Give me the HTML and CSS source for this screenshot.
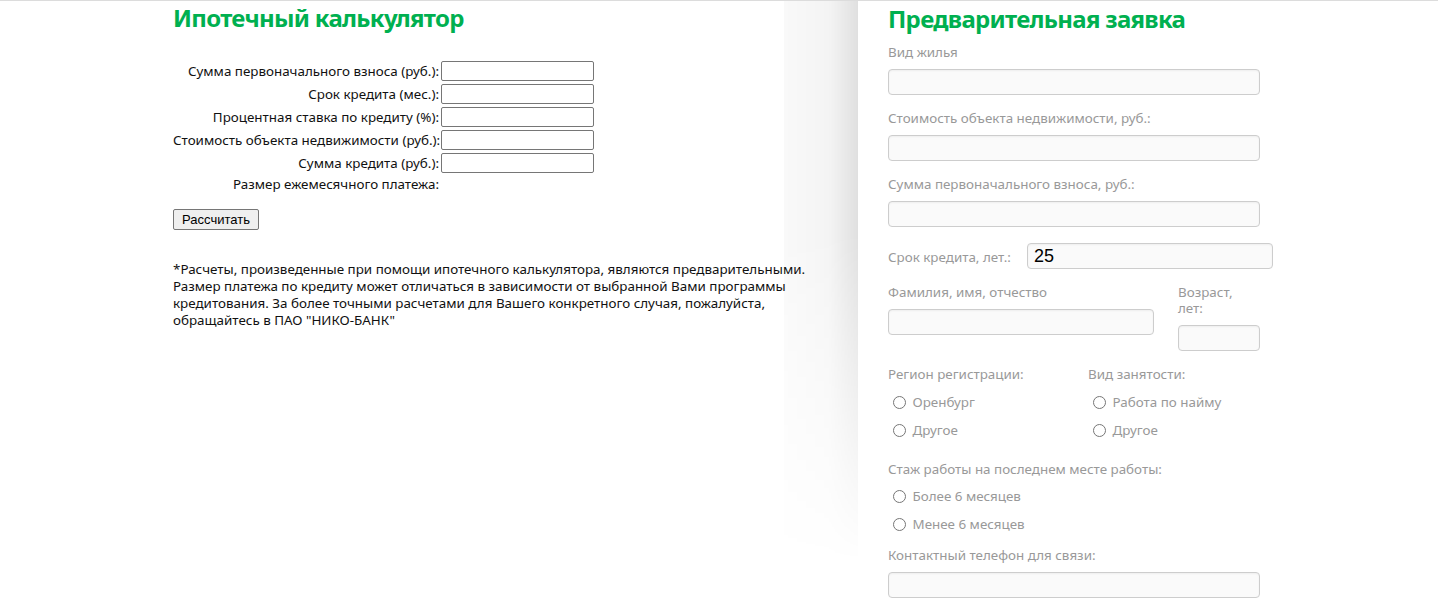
FILE: index.html
```html
<!DOCTYPE html>
<html lang="ru">
<head>
<meta charset="utf-8">
<title>Ипотечный калькулятор</title>
<link rel="stylesheet" href="styles.css">
</head>
<body>
<div class="page">
  <section class="calc">
    <h1 class="title">Ипотечный калькулятор</h1>
    <div class="calc-grid">
      <label class="calc-label">Сумма первоначального взноса (руб.):</label><input class="calc-input" type="text">
      <label class="calc-label">Срок кредита (мес.):</label><input class="calc-input" type="text">
      <label class="calc-label">Процентная ставка по кредиту (%):</label><input class="calc-input" type="text">
      <label class="calc-label">Стоимость объекта недвижимости (руб.):</label><input class="calc-input" type="text">
      <label class="calc-label">Сумма кредита (руб.):</label><input class="calc-input" type="text">
      <span class="calc-label calc-label--result">Размер ежемесячного платежа:</span><span class="calc-result"></span>
    </div>
    <button class="calc-btn" type="button">Рассчитать</button>
    <p class="note">*Расчеты, произведенные при помощи ипотечного калькулятора, являются предварительными. Размер платежа по кредиту может отличаться в зависимости от выбранной Вами программы кредитования. За более точными расчетами для Вашего конкретного случая, пожалуйста, обращайтесь в ПАО "НИКО-БАНК"</p>
  </section>

  <section class="apply">
    <h1 class="title">Предварительная заявка</h1>

    <div class="field">
      <label class="lbl">Вид жилья</label>
      <input class="inp" type="text">
    </div>
    <div class="field">
      <label class="lbl">Стоимость объекта недвижимости, руб.:</label>
      <input class="inp" type="text">
    </div>
    <div class="field">
      <label class="lbl">Сумма первоначального взноса, руб.:</label>
      <input class="inp" type="text">
    </div>
    <div class="field field--inline">
      <label class="lbl lbl--inline">Срок кредита, лет.:</label>
      <input class="inp inp--term" type="text" value="25">
    </div>
    <div class="field-row">
      <div class="field field--fio">
        <label class="lbl">Фамилия, имя, отчество</label>
        <input class="inp inp--fio" type="text">
      </div>
      <div class="field field--age">
        <label class="lbl lbl--age">Возраст,<br>лет:</label>
        <input class="inp inp--age" type="text">
      </div>
    </div>
    <div class="radio-row">
      <div class="radio-group">
        <div class="lbl">Регион регистрации:</div>
        <label class="radio"><input type="radio" name="region"> Оренбург</label>
        <label class="radio"><input type="radio" name="region"> Другое</label>
      </div>
      <div class="radio-group">
        <div class="lbl">Вид занятости:</div>
        <label class="radio"><input type="radio" name="job"> Работа по найму</label>
        <label class="radio"><input type="radio" name="job"> Другое</label>
      </div>
    </div>
    <div class="radio-group radio-group--wide">
      <div class="lbl">Стаж работы на последнем месте работы:</div>
      <label class="radio"><input type="radio" name="exp"> Более 6 месяцев</label>
      <label class="radio"><input type="radio" name="exp"> Менее 6 месяцев</label>
    </div>
    <div class="field field--phone">
      <label class="lbl">Контактный телефон для связи:</label>
      <input class="inp" type="text">
    </div>
  </section>
</div>
</body>
</html>
```
FILE: styles.css
```css
html, body {
  margin: 0;
  padding: 0;
  background: #fff;
}
body {
  font-family: "Noto Sans", "DejaVu Sans", sans-serif;
  font-size: 13.4px;
  color: #111;
  border-top: 1px solid #dcdcdc;
  height: 610px;
  overflow: hidden;
}
.page {
  display: flex;
  height: 100%;
}
.title {
  margin: 0;
  font-family: "Noto Sans", sans-serif;
  font-weight: 700;
  font-size: 24px;
  line-height: 34px;
  color: #00b050;
  letter-spacing: -0.7px;
}

/* left: calculator */
.calc {
  width: 685px;
  padding-left: 173px;
  flex: none;
}
.calc-grid {
  margin-top: 26px;
  display: grid;
  grid-template-columns: 268px 153px;
  grid-auto-rows: 20px;
  row-gap: 3px;
  align-items: center;
}
.calc-label {
  text-align: right;
  padding-right: 2px;
  white-space: nowrap;
  line-height: 16px;
}
.calc-label--result {
  align-self: start;
}
.calc-input {
  box-sizing: border-box;
  width: 153px;
  height: 20px;
  margin: 0;
  border: 1px solid #767676;
  border-radius: 2px;
  padding: 1px 2px;
  font-size: 13px;
}
.calc-btn {
  display: block;
  margin-top: 13px;
  width: 86px;
  height: 21px;
  padding: 0;
  border: 1px solid #767676;
  border-radius: 2px;
  background: #efefef;
  font-family: "Liberation Sans", Arial, sans-serif;
  font-size: 13px;
  color: #000;
}
.note {
  margin: 31px 0 0;
  width: 650px;
  line-height: 17px;
}

/* right: application */
.apply {
  position: relative;
  flex: 1;
  padding-left: 30px;
  background: #fff;
}
.apply::before {
  content: "";
  position: absolute;
  top: 0;
  right: 100%;
  width: 74px;
  height: 100%;
  background: linear-gradient(to right, rgba(0,0,0,0.025), rgba(0,0,0,0.045) 60%, rgba(0,0,0,0.12));
  -webkit-mask-image: linear-gradient(to bottom, #000 0%, #000 38%, rgba(0,0,0,0.5) 65%, transparent 92%);
  mask-image: linear-gradient(to bottom, #000 0%, #000 38%, rgba(0,0,0,0.5) 65%, transparent 92%);
  pointer-events: none;
}
.apply .title {
  line-height: 36px;
}
.lbl {
  display: block;
  color: #999;
  line-height: 17px;
}
.field {
  display: flex;
  flex-direction: column;
  gap: 8px;
  margin-top: 7px;
}
.field + .field {
  margin-top: 15px;
}
.inp {
  box-sizing: border-box;
  width: 372px;
  height: 26px;
  margin: 0;
  border: 1px solid #cdcdcd;
  border-radius: 4px;
  background: #fafafa;
  box-shadow: inset 0 1px 2px rgba(0,0,0,0.05);
  padding: 2px 6px;
  font-family: "Liberation Sans", Arial, sans-serif;
  font-size: 18px;
  color: #000;
}
.field--inline {
  flex-direction: row;
  align-items: center;
  gap: 0;
  margin-top: 16px !important;
}
.lbl--inline {
  width: 139px;
  padding-top: 2px;
}
.inp--term {
  width: 246px;
}
.field-row {
  display: flex;
  margin-top: 15px;
  gap: 24px;
}
.field-row .field {
  margin-top: 0;
}
.inp--fio {
  width: 266px;
}
.field--age {
  gap: 9px;
}
.lbl--age {
  line-height: 16px;
}
.inp--age {
  width: 82px;
}
.radio-row {
  display: flex;
  margin-top: 15px;
}
.radio-group {
  width: 200px;
  display: flex;
  flex-direction: column;
}
.radio-group--wide {
  width: auto;
  margin-top: 17px;
}
.radio {
  display: flex;
  align-items: center;
  height: 28px;
  color: #999;
  white-space: pre;
}
.radio:first-of-type {
  margin-top: 4px;
}
.radio-row .radio:first-of-type {
  margin-top: 5px;
}
.radio input {
  margin: 0 3px 0 5px;
  width: 13px;
  height: 13px;
}
.field.field--phone {
  margin-top: 9px;
}
```
